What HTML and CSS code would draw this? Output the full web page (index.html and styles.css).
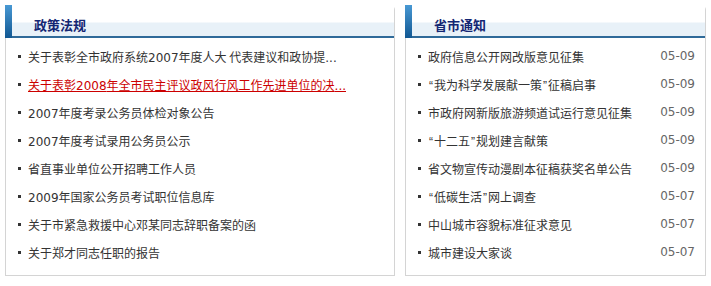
FILE: index.html
```html
<!DOCTYPE html>
<html>

<head>
	<meta charset="utf-8">
	<title>政策法规 / 省市通知</title>
	<link rel="stylesheet" href="styles.css">
</head>

<body>
	<div class='boxes'>
		<div class='box box--wide'>
			<h2 class='box__hed'><span>政策法规</span></h2>
			<ul class='box__list'>
				<li><a href='#'>关于表彰全市政府系统<span class='num'>2007</span>年度人大 代表建议和政协提<span class='num'>...</span></a></li>
				<li><a href='#' class='hot'>关于表彰<span class='num'>2008</span>年全市民主评议政风行风工作先进单位的决<span class='num'>...</span></a></li>
				<li><a href='#'><span class='num'>2007</span>年度考录公务员体检对象公告</a></li>
				<li><a href='#'><span class='num'>2007</span>年度考试录用公务员公示</a></li>
				<li><a href='#'>省直事业单位公开招聘工作人员</a></li>
				<li><a href='#'><span class='num'>2009</span>年国家公务员考试职位信息库</a></li>
				<li><a href='#'>关于市紧急救援中心邓某同志辞职备案的函</a></li>
				<li><a href='#'>关于郑才同志任职的报告</a></li>
			</ul>
		</div>
		<div class='box box--narrow'>
			<h2 class='box__hed'><span>省市通知</span></h2>
			<ul class='box__list'>
				<li><a href='#'>政府信息公开网改版意见征集</a><span class='date'>05-09</span></li>
				<li><a href='#'><span class='q'>“</span>我为科学发展献一策<span class='q'>”</span>征稿启事</a><span class='date'>05-09</span></li>
				<li><a href='#'>市政府网新版旅游频道试运行意见征集</a><span class='date'>05-09</span></li>
				<li><a href='#'><span class='q'>“</span>十二五<span class='q'>”</span>规划建言献策</a><span class='date'>05-09</span></li>
				<li><a href='#'>省文物宣传动漫剧本征稿获奖名单公告</a><span class='date'>05-09</span></li>
				<li><a href='#'><span class='q'>“</span>低碳生活<span class='q'>”</span>网上调查</a><span class='date'>05-07</span></li>
				<li><a href='#'>中山城市容貌标准征求意见</a><span class='date'>05-07</span></li>
				<li><a href='#'>城市建设大家谈</a><span class='date'>05-07</span></li>
			</ul>
		</div>
	</div>
</body>

</html>
```

FILE: styles.css
```css
/* page */

* {
	box-sizing: border-box;
}

html,
body {
	margin: 0;
	padding: 0;
	background: #fff;
	font-family: 'Noto Sans CJK SC', sans-serif;
	font-size: 12px;
	color: #333;
}

ul,
h2 {
	margin: 0;
	padding: 0;
}

a {
	color: #333;
	text-decoration: none;
}

.num,
.date {
	font-family: 'DejaVu Sans', sans-serif;
}

.q {
	font-family: 'Liberation Sans', sans-serif;
	display: inline-block;
	width: 6px;
	text-align: center;
}

/* boxes */

.boxes {
	display: flex;
	gap: 10px;
	padding: 5px;
}

.box {
	height: 271px;
	border: 1px solid #d4d4d4;
	border-top-right-radius: 5px;
	border-left: 0;
}

.box--wide {
	width: 390px;
}

.box--narrow {
	width: 301px;
}

.box__hed {
	height: 33px;
	margin-top: -1px;
	display: flex;
	align-items: center;
	padding: 5px 0 0 22px;
	border-left: 7px solid #1d6fae;
	border-image: linear-gradient(to bottom, #4a9bd6, #0f5590) 1;
	border-image-width: 0 0 0 7px;
	background: linear-gradient(to bottom, #fff 0, #fff 17px, #e8f1f8 18px, #e8f1f8 31px, #2f6a99 31px, #2f6a99 33px);
	font-size: 13px;
	font-weight: 700;
	color: #132673;
}

.box__list {
	list-style: none;
	padding: 4px 10px 0 12px;
	border-left: 1px solid #d4d4d4;
	height: 238px;
}

.box__list li {
	display: flex;
	align-items: center;
	height: 28px;
	white-space: nowrap;
}

.box__list li::before {
	content: '';
	width: 3px;
	height: 3px;
	margin-right: 7px;
	background: #333;
	flex: none;
}

.box__list a {
	flex: 1;
	overflow: hidden;
}

.box__list a.hot {
	flex: none;
	color: #c00;
	text-decoration: underline;
}

.date {
	color: #666;
	font-size: 12px;
}
```
